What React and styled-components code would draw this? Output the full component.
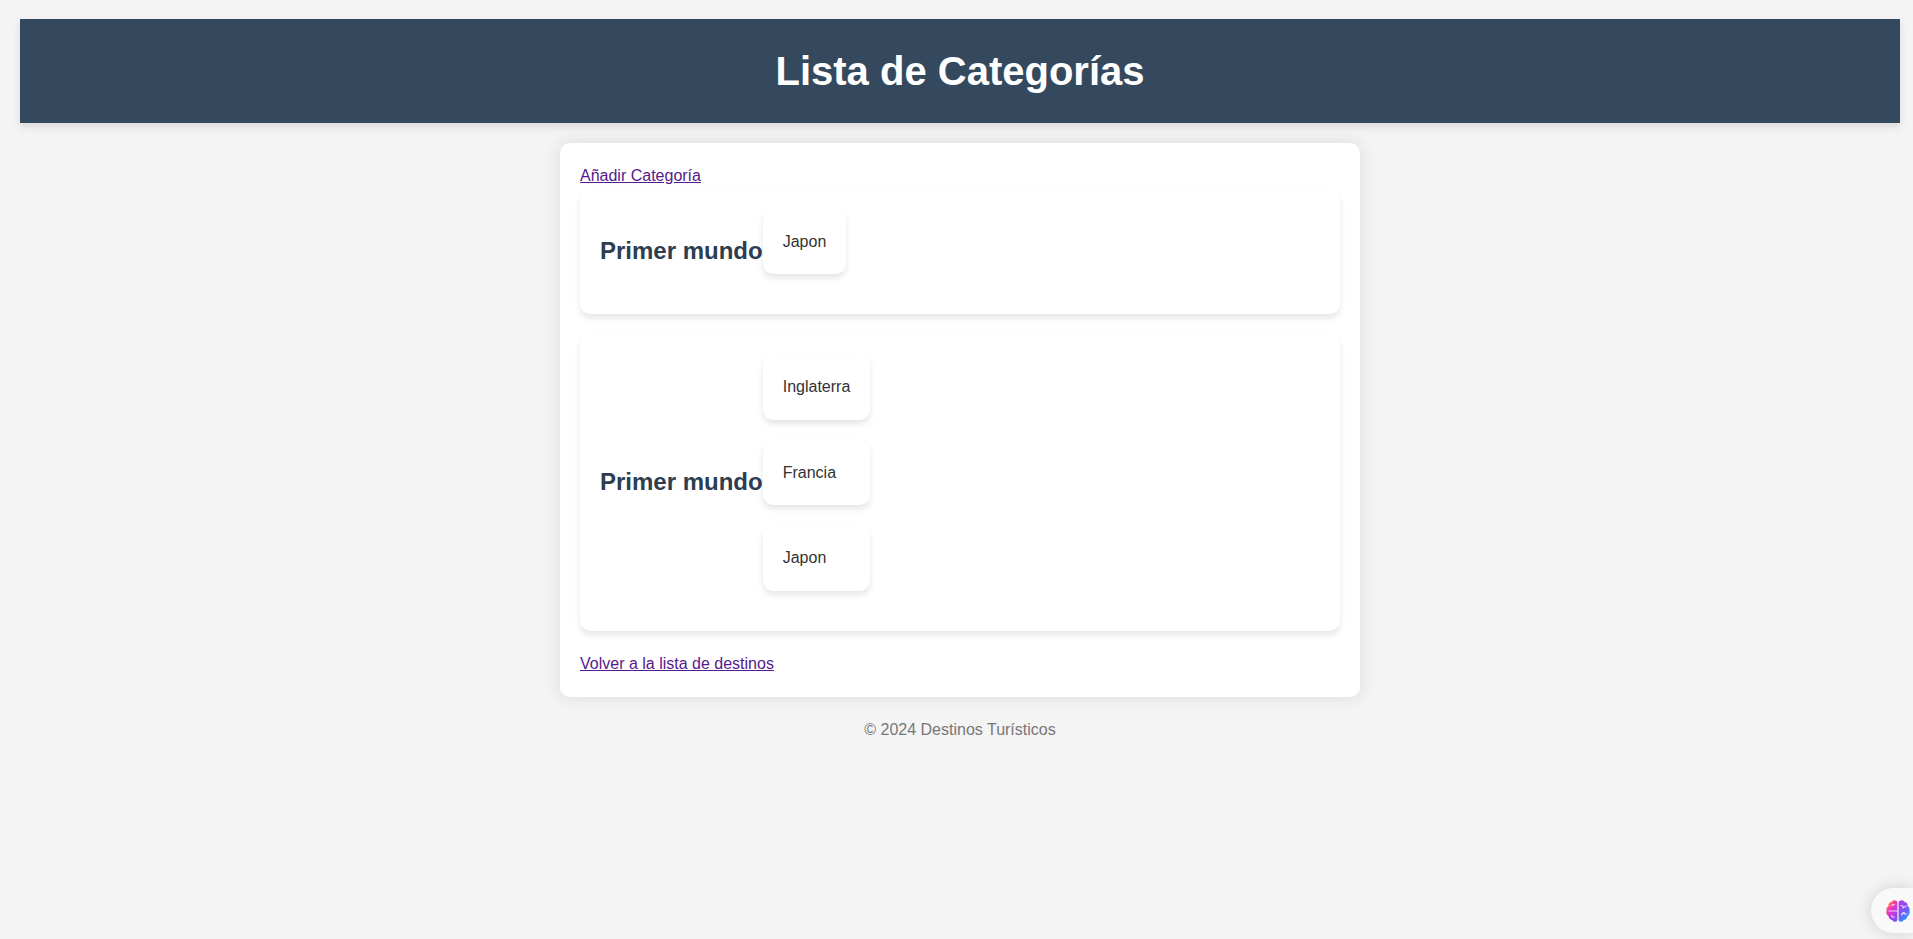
import React from "react";
import styled, { createGlobalStyle } from "styled-components";

const GlobalStyle = createGlobalStyle`
  body {
    margin: 0;
    background: #f4f4f4;
    color: #333;
    font-family: Arial, "Liberation Sans", sans-serif;
    font-size: 16px;
    line-height: 1.6;
  }
`;

const Page = styled.div`
  padding: 19px 13px 20px 20px;
`;

const Header = styled.header`
  padding: 20px;
  background: #34495e;
  color: #fff;
  text-align: center;
  box-shadow: 0 4px 8px rgba(0, 0, 0, 0.1);
`;

const Title = styled.h1`
  margin: 0;
  font-size: 40px;
`;

const Container = styled.main`
  max-width: 760px;
  margin: 20px auto;
  padding: 20px;
  background: #fff;
  border-radius: 10px;
  box-shadow: 0 0 20px rgba(0, 0, 0, 0.1);
`;

const Link = styled.a`
  color: #551a8b;
  text-decoration: underline;
`;

const List = styled.ul`
  margin: 0;
  padding: 0;
  list-style: none;
`;

const Card = styled.li`
  margin-bottom: 20px;
  padding: 20px;
  background: #fff;
  border-radius: 10px;
  box-shadow: 0 4px 6px rgba(0, 0, 0, 0.1);
`;

const CategoryCard = styled(Card)`
  display: flex;
  align-items: center;
`;

const CategoryName = styled.h2`
  margin: 0;
  color: #2c3e50;
  font-size: 24px;
`;

const Footer = styled.footer`
  color: #777;
  text-align: center;
`;

const AssistantButton = styled.button`
  position: fixed;
  right: 0;
  bottom: 6px;
  display: flex;
  align-items: center;
  width: 42px;
  height: 45px;
  padding: 0 0 0 15px;
  border: 0;
  border-radius: 23px 0 0 23px;
  background: #f9f9f9;
  box-shadow: 0 0 16px rgba(0, 0, 0, 0.15);
  cursor: pointer;
`;

const BrainIcon = () => (
  <svg width="24" height="22" viewBox="0 0 24 22" aria-hidden="true">
    <defs>
      <linearGradient id="brainLeft" x1="0.1" y1="0" x2="0.7" y2="1">
        <stop offset="0.1" stopColor="#ff9f35" />
        <stop offset="0.38" stopColor="#f736ae" />
        <stop offset="0.65" stopColor="#c837e2" />
        <stop offset="1" stopColor="#7a55f2" />
      </linearGradient>
      <linearGradient id="brainRight" x1="0.2" y1="0" x2="0.7" y2="1">
        <stop offset="0" stopColor="#b13df0" />
        <stop offset="0.5" stopColor="#7a55f2" />
        <stop offset="1" stopColor="#1fa8ff" />
      </linearGradient>
    </defs>
    <path
      fill="url(#brainLeft)"
      d="M11.400 2.200C11-.3 6.600-.6 5.700 1.700 3.200 2 2 3.900 2.500 5.900.7 7 0 9 .6 10.900c-.8 2 .2 4.400 2 5.400.2 2.300 1.900 3.800 3.900 3.900 1.200 2.300 4.500 2.200 4.900-.4z"
    />
    <path
      fill="url(#brainRight)"
      d="M12.600 2.200C13-.3 17.400-.6 18.300 1.700c2.500.3 3.700 2.200 3.200 4.200 1.800 1.100 2.500 3.100 1.900 5 .8 2-.2 4.400-2 5.400-.2 2.300-1.900 3.800-3.900 3.900-1.200 2.300-4.500 2.200-4.900-.4z"
    />
    <g fill="none" stroke="#f0d2ff" strokeWidth="1.200" strokeLinecap="round">
      <path d="M3 11H11M5.800 5.800Q6.300 4.200 8.300 4.600M5.600 15.600Q6 17.200 8 17.200" />
      <path d="M15 5.500Q17.200 5.500 17.300 8M17.300 7Q19.300 7.300 20 6M15.500 15Q15.800 12.500 18.500 12.500M17 13Q18.500 14.700 20.200 13.700" />
    </g>
  </svg>
);

const categories = [
  { id: 1, name: "Primer mundo", destinations: ["Japon"] },
  { id: 2, name: "Primer mundo", destinations: ["Inglaterra", "Francia", "Japon"] },
];

export default function App() {
  return (
    <>
      <GlobalStyle />
      <Page>
        <Header>
          <Title>Lista de Categorías</Title>
        </Header>
        <Container>
          <Link href="#nueva-categoria">Añadir Categoría</Link>
          <List>
            {categories.map((category) => (
              <CategoryCard key={category.id}>
                <CategoryName>{category.name}</CategoryName>
                <List>
                  {category.destinations.map((destination) => (
                    <Card key={destination}>{destination}</Card>
                  ))}
                </List>
              </CategoryCard>
            ))}
          </List>
          <Link href="#destinos">Volver a la lista de destinos</Link>
        </Container>
        <Footer>© 2024 Destinos Turísticos</Footer>
      </Page>
      <AssistantButton type="button" aria-label="Asistente">
        <BrainIcon />
      </AssistantButton>
    </>
  );
}
